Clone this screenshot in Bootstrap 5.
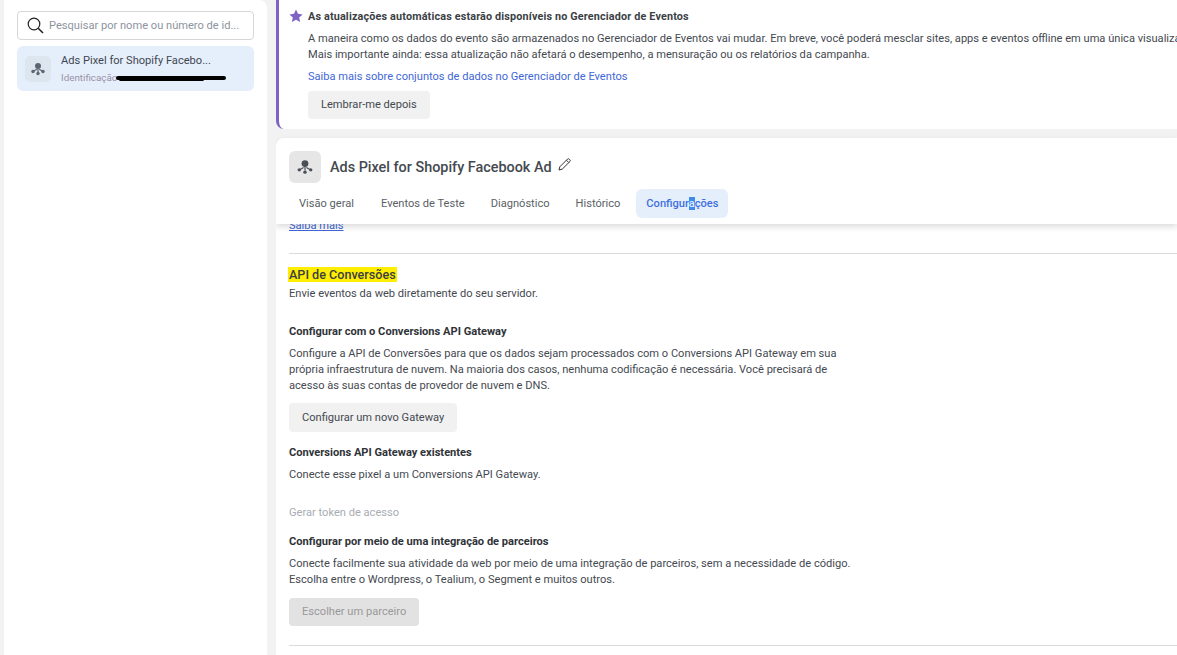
<!DOCTYPE html>
<html lang="pt">

<head>
  <meta charset="UTF-8" />
  <title>Gerenciador de Eventos</title>
  <meta name="viewport" content="width=device-width, initial-scale=1" />
  <link href="https://cdn.jsdelivr.net/npm/bootstrap@5.3.0/dist/css/bootstrap.min.css" rel="stylesheet">
  <style>
    html,
    body {
      height: 655px;
      overflow: hidden;
    }

    body {
      font-family: Roboto, "Liberation Sans", sans-serif;
      font-size: 11.1px;
      line-height: 16px;
      background-color: #f2f2f2;
      color: #444950;
    }

    .side-panel {
      width: 263px;
      height: 655px;
      margin-left: 4px;
      padding: 11px 13px;
      background-color: #fff;
      border-top-right-radius: 8px;
      flex: none;
    }

    .search-box {
      height: 29px;
      padding-left: 9px;
      gap: 5px;
      border: 1px solid #d6d6d6;
      border-radius: 4px;
      color: #8d949e;
      white-space: nowrap;
    }

    .pixel-row {
      height: 45px;
      margin-top: 6px;
      padding-left: 8px;
      gap: 10px;
      background-color: #e5effb;
      border-radius: 6px;
    }

    .pixel-thumb {
      width: 26px;
      height: 26px;
      background-color: #dde5ee;
      border-radius: 5px;
      flex: none;
    }

    .pixel-name {
      color: #3f4650;
      white-space: nowrap;
    }

    .pixel-id {
      position: relative;
      margin-top: 2px;
      font-size: 9.8px;
      line-height: 13px;
      color: #9a8fa8;
    }

    .redact-line {
      position: absolute;
      top: 5px;
      left: 55px;
      width: 110px;
      height: 4px;
      background-color: #000;
      border-radius: 2px;
    }

    .redact-line-low {
      top: 7px;
      left: 58px;
      width: 85px;
      height: 3px;
    }

    .main-col {
      margin-left: 9px;
      min-width: 0;
      flex: 1;
      overflow: hidden;
    }

    .notice-box {
      height: 129px;
      padding: 9px 0 0 10px;
      gap: 5px;
      background-color: #fff;
      border-left: 3px solid #7f63c4;
      border-bottom-left-radius: 8px;
      white-space: nowrap;
    }

    .notice-title {
      font-size: 10.8px;
      font-weight: 700;
      color: #3b3f45;
      letter-spacing: .16px;
    }

    .notice-text {
      margin-top: 6px;
    }

    .blue-link {
      color: #4267d6;
      text-decoration: none;
    }

    .notice-link {
      display: block;
      margin-top: 6px;
    }

    .grey-btn {
      display: block;
      padding: 0 13px;
      height: 29px;
      line-height: 29px;
      background-color: #f1f1f1;
      border: 0;
      border-radius: 4px;
      font-size: 11.1px;
      color: #444950;
      white-space: nowrap;
    }

    .notice-btn {
      margin-top: 6px;
      height: 28px;
      line-height: 28px;
    }

    .head-card {
      position: relative;
      z-index: 1;
      height: 86px;
      margin-top: 9px;
      padding: 13px 13px 0;
      background-color: #fff;
      border-top-left-radius: 8px;
      box-shadow: 0 3px 6px rgba(0, 0, 0, .14);
    }

    .head-thumb {
      width: 32px;
      height: 32px;
      background-color: #e6e6e6;
      border-radius: 6px;
      flex: none;
    }

    .head-title {
      margin: 1px 0 0 9px;
      font-family: inherit;
      font-size: 14.4px;
      line-height: 32px;
      font-weight: 500;
      color: #444950;
    }

    .head-pencil {
      margin: 7px 0 0 6px;
    }

    .head-tabs {
      margin-top: 5px;
      gap: 6px;
    }

    .head-tab {
      height: 29px;
      line-height: 29px;
      padding: 0 10px;
      font-size: 11.1px;
      color: #5a5f66;
      border-radius: 6px;
    }

    .head-tab:first-child {
      margin-right: 1px;
    }

    .head-tab-on {
      background-color: #e5effb;
      color: #3f70e0;
      font-weight: 500;
    }

    .head-tab-on i {
      font-style: normal;
      background-color: #3f8bea;
      color: #dcebff;
    }

    .body-card {
      height: 431px;
      padding: 0 0 0 13px;
      background-color: #fff;
      overflow: hidden;
    }

    .scrolled-link {
      display: block;
      margin-top: -6px;
      text-decoration: underline;
    }

    .body-rule {
      margin: 19px 0 0;
      border-top: 1px solid #dcdcdc;
      opacity: 1;
    }

    .api-title {
      margin: 13px 0 0;
      font-family: inherit;
      font-size: 12.6px;
      line-height: 16px;
      font-weight: 500;
      color: #3b3f45;
    }

    .api-title span {
      background-color: #ffee00;
      padding: 0 1px;
      margin-left: -1px;
    }

    .api-sub {
      margin-top: 3px;
    }

    .sect-title {
      margin: 22px 0 0;
      font-family: inherit;
      font-size: 11.1px;
      line-height: 16px;
      font-weight: 700;
      color: #2f3338;
    }

    .sect-text {
      width: 570px;
      margin-top: 6px;
    }

    .wide-text {
      white-space: nowrap;
    }

    .body-btn {
      margin-top: 9px;
    }

    .after-btn {
      margin-top: 13px;
    }

    .off-label {
      margin-top: 22px;
      color: #a8acb2;
    }

    .after-label {
      margin-top: 13px;
    }

    .off-btn {
      margin-top: 10px;
      height: 28px;
      line-height: 28px;
      background-color: #e2e2e2;
      color: #999;
    }

    .last-rule {
      margin-top: 19px;
    }
  </style>
</head>

<body>
  <div class="d-flex">
    <aside class="side-panel">
      <div class="search-box d-flex align-items-center">
        <svg class="flex-shrink-0" width="17" height="17" viewBox="0 0 17 17" fill="none" stroke="#222" stroke-width="1.2"><circle cx="7" cy="7" r="5.800"/><path d="M11.200 11.200 16 16" stroke-width="1.600"/></svg>
        <span>Pesquisar por nome ou número de id...</span>
      </div>
      <div class="pixel-row d-flex align-items-center">
        <div class="pixel-thumb d-flex align-items-center justify-content-center">
          <svg width="14" height="14" viewBox="0 0 14 14" fill="#5c6470"><circle cx="7" cy="4" r="3"/><circle cx="2" cy="9.500" r="1.700"/><circle cx="12" cy="9.500" r="1.700"/><circle cx="7" cy="11.500" r="1.700"/><path d="M6.400 6h1.200v4H6.400zM2.500 8.600l3-1.800.6 1-3 1.800zM11.500 8.600l-3-1.800-.6 1 3 1.800z"/></svg>
        </div>
        <div>
          <div class="pixel-name">Ads Pixel for Shopify Facebo...</div>
          <div class="pixel-id">Identificação<span class="redact-line"></span><span class="redact-line redact-line-low"></span></div>
        </div>
      </div>
    </aside>

    <main class="main-col">
      <section class="notice-box d-flex">
        <svg class="flex-shrink-0" width="14" height="14" viewBox="0 0 14 14" fill="#7f63c4"><path d="M7 .6 9 4.800l4.600.6-3.400 3.100.9 4.600L7 10.800 2.900 13.100l.9-4.600L.4 5.400 5 4.800z"/></svg>
        <div>
          <div class="notice-title">As atualizações automáticas estarão disponíveis no Gerenciador de Eventos</div>
          <div class="notice-text">A maneira como os dados do evento são armazenados no Gerenciador de Eventos vai mudar. Em breve, você poderá mesclar sites, apps e eventos offline em uma única visualização.<br>Mais importante ainda: essa atualização não afetará o desempenho, a mensuração ou os relatórios da campanha.</div>
          <a class="blue-link notice-link" href="#">Saiba mais sobre conjuntos de dados no Gerenciador de Eventos</a>
          <button class="grey-btn notice-btn" type="button">Lembrar-me depois</button>
        </div>
      </section>

      <header class="head-card">
        <div class="d-flex align-items-start">
          <div class="head-thumb d-flex align-items-center justify-content-center">
            <svg width="16" height="16" viewBox="0 0 14 14" fill="#4a4f57"><circle cx="7" cy="4" r="3"/><circle cx="2" cy="9.500" r="1.500"/><circle cx="12" cy="9.500" r="1.500"/><circle cx="7" cy="11.500" r="1.500"/><path d="M6.500 6h1v4h-1zM2.500 8.700l3-1.800.5.900-3 1.800zM11.500 8.700l-3-1.800-.5.900 3 1.800z"/></svg>
          </div>
          <h1 class="head-title">Ads Pixel for Shopify Facebook Ad</h1>
          <svg class="head-pencil" width="13" height="13" viewBox="0 0 13 13" fill="none" stroke="#333" stroke-width="1"><path d="M1 12l.8-3.200L9.500 1.100a1.200 1.200 0 0 1 1.700 0l.7.7a1.200 1.200 0 0 1 0 1.700L4.200 11.200zM8.400 2.200l2.400 2.400"/></svg>
        </div>
        <nav class="head-tabs d-flex">
          <div class="head-tab">Visão geral</div>
          <div class="head-tab">Eventos de Teste</div>
          <div class="head-tab">Diagnóstico</div>
          <div class="head-tab">Histórico</div>
          <div class="head-tab head-tab-on">Configur<i>a</i>ções</div>
        </nav>
      </header>

      <section class="body-card">
        <a class="blue-link scrolled-link" href="#">Saiba mais</a>
        <hr class="body-rule">
        <h2 class="api-title"><span>API de Conversões</span></h2>
        <div class="api-sub">Envie eventos da web diretamente do seu servidor.</div>

        <h3 class="sect-title">Configurar com o Conversions API Gateway</h3>
        <div class="sect-text">Configure a API de Conversões para que os dados sejam processados com o Conversions API Gateway em sua própria infraestrutura de nuvem. Na maioria dos casos, nenhuma codificação é necessária. Você precisará de acesso às suas contas de provedor de nuvem e DNS.</div>
        <button class="grey-btn body-btn" type="button">Configurar um novo Gateway</button>

        <h3 class="sect-title after-btn">Conversions API Gateway existentes</h3>
        <div class="sect-text">Conecte esse pixel a um Conversions API Gateway.</div>

        <div class="off-label">Gerar token de acesso</div>

        <h3 class="sect-title after-label">Configurar por meio de uma integração de parceiros</h3>
        <div class="sect-text wide-text">Conecte facilmente sua atividade da web por meio de uma integração de parceiros, sem a necessidade de código.<br>Escolha entre o Wordpress, o Tealium, o Segment e muitos outros.</div>
        <button class="grey-btn off-btn" type="button">Escolher um parceiro</button>
        <hr class="body-rule last-rule">
      </section>
    </main>
  </div>
  <script src="https://cdn.jsdelivr.net/npm/bootstrap@5.3.0/dist/js/bootstrap.bundle.min.js"></script>
</body>

</html>
